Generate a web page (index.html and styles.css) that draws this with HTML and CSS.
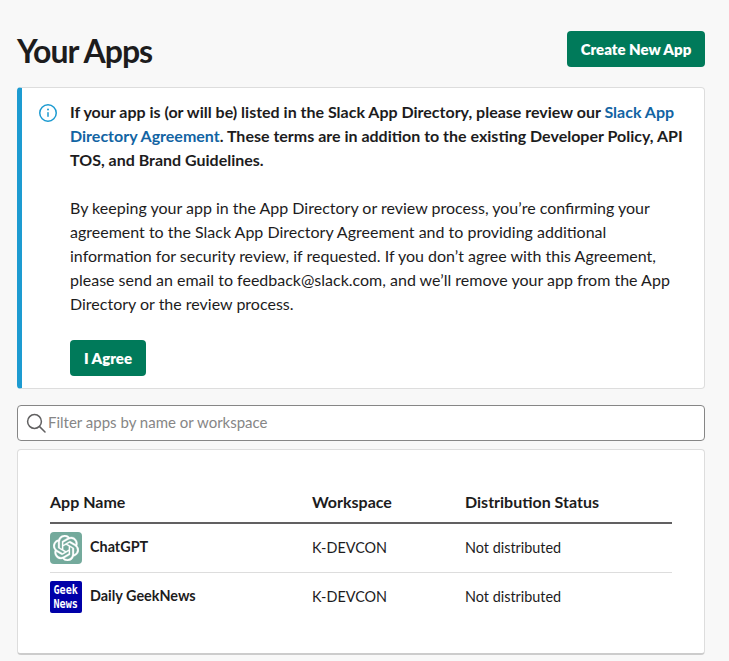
FILE: index.html
```html
<!DOCTYPE html>
<html lang="en">
<head>
<meta charset="utf-8">
<title>Your Apps</title>
<link rel="stylesheet" href="styles.css">
</head>
<body>
<main class="page">
  <header class="head">
    <h1 class="title">Your Apps</h1>
    <button class="btn btn-create">Create New App</button>
  </header>
  <section class="alert">
    <svg class="alert-icon" width="20" height="20" viewBox="0 0 20 20" fill="none"><circle cx="10" cy="10" r="8.25" stroke="#1d9bd1" stroke-width="1.5"/><rect x="9.25" y="9" width="1.5" height="5" rx=".7" fill="#1d9bd1"/><circle cx="10" cy="6.6" r="1" fill="#1d9bd1"/></svg>
    <div class="alert-body">
      <p class="alert-strong">If your app is (or will be) listed in the Slack App Directory, please review our <a class="link" href="#">Slack App Directory Agreement</a>. These terms are in addition to the existing Developer Policy, API TOS, and Brand Guidelines.</p>
      <p class="alert-text">By keeping your app in the App Directory or review process, you’re confirming your agreement to the Slack App Directory Agreement and to providing additional information for security review, if requested. If you don’t agree with this Agreement, please send an email to feedback@slack.com, and we’ll remove your app from the App Directory or the review process.</p>
      <button class="btn btn-agree">I Agree</button>
    </div>
  </section>
  <label class="search">
    <svg class="search-icon" width="20" height="20" viewBox="0 0 20 20" fill="none" stroke="#616061" stroke-width="1.5"><circle cx="8.5" cy="8.5" r="6.9"/><path d="M13.6 13.6 19 19" stroke-linecap="round"/></svg>
    <input class="search-input" type="text" placeholder="Filter apps by name or workspace">
  </label>
  <section class="card">
    <table class="apps">
      <thead>
        <tr><th class="col-name">App Name</th><th class="col-work">Workspace</th><th>Distribution Status</th></tr>
      </thead>
      <tbody>
        <tr>
          <td><div class="app"><span class="app-icon icon-gpt"><svg width="26" height="26" viewBox="0 0 24 24" fill="#fff" stroke="#fff" stroke-width=".3"><path d="M22.2819 9.8211a5.9847 5.9847 0 0 0-.5157-4.9108 6.0462 6.0462 0 0 0-6.5098-2.9A6.0651 6.0651 0 0 0 4.9807 4.1818a5.9847 5.9847 0 0 0-3.9977 2.9 6.0462 6.0462 0 0 0 .7427 7.0966 5.98 5.98 0 0 0 .511 4.9107 6.051 6.051 0 0 0 6.5146 2.9001A5.9847 5.9847 0 0 0 13.2599 24a6.0557 6.0557 0 0 0 5.7718-4.2058 5.9894 5.9894 0 0 0 3.9977-2.9001 6.0557 6.0557 0 0 0-.7475-7.0729zm-9.022 12.6081a4.4755 4.4755 0 0 1-2.8764-1.0408l.1419-.0804 4.7783-2.7582a.7948.7948 0 0 0 .3927-.6813v-6.7369l2.02 1.1686a.071.071 0 0 1 .038.052v5.5826a4.504 4.504 0 0 1-4.4945 4.4944zm-9.6607-4.1254a4.4708 4.4708 0 0 1-.5346-3.0137l.142.0852 4.783 2.7582a.7712.7712 0 0 0 .7806 0l5.8428-3.3685v2.3324a.0804.0804 0 0 1-.0332.0615L9.74 19.9502a4.4992 4.4992 0 0 1-6.1408-1.6464zM2.3408 7.8956a4.485 4.485 0 0 1 2.3655-1.9728V11.6a.7664.7664 0 0 0 .3879.6765l5.8144 3.3543-2.0201 1.1685a.0757.0757 0 0 1-.071 0l-4.8303-2.7865A4.504 4.504 0 0 1 2.3408 7.872zm16.5963 3.8558L13.1038 8.364 15.1192 7.2a.0757.0757 0 0 1 .071 0l4.8303 2.7913a4.4944 4.4944 0 0 1-.6765 8.1042v-5.6772a.79.79 0 0 0-.407-.667zm2.0107-3.0231l-.142-.0852-4.7735-2.7818a.7759.7759 0 0 0-.7854 0L9.409 9.2297V6.8974a.0662.0662 0 0 1 .0284-.0615l4.8303-2.7866a4.4992 4.4992 0 0 1 6.6802 4.66zM8.3065 12.863l-2.02-1.1638a.0804.0804 0 0 1-.038-.0567V6.0742a4.4992 4.4992 0 0 1 7.3757-3.4537l-.142.0805L8.704 5.459a.7948.7948 0 0 0-.3927.6813zm1.0976-2.3654l2.602-1.4998 2.6069 1.4998v2.9994l-2.5974 1.4997-2.6067-1.4997Z"/></svg></span><a class="app-name" href="#">ChatGPT</a></div></td>
          <td>K-DEVCON</td>
          <td>Not distributed</td>
        </tr>
        <tr>
          <td><div class="app"><span class="app-icon icon-geek"><span class="geek-line">Geek</span><span class="geek-line">News</span></span><a class="app-name" href="#">Daily GeekNews</a></div></td>
          <td>K-DEVCON</td>
          <td>Not distributed</td>
        </tr>
      </tbody>
    </table>
  </section>
</main>
</body>
</html>
```
FILE: styles.css
```css
* { box-sizing: border-box; }
html, body { margin: 0; height: 661px; overflow: hidden; }
body {
  background: #f8f8f8;
  color: #1d1c1d;
  font-family: Lato, "Liberation Sans", sans-serif;
  font-size: 16px;
  line-height: 24px;
}
.page { padding: 31px 24px 0 17px; }
.head { display: flex; justify-content: space-between; align-items: center; height: 36px; margin-bottom: 20px; }
.title { margin: 4px 0 0; font-size: 32px; font-weight: 700; line-height: 40px; letter-spacing: -1px; }
.btn {
  border: 0;
  border-radius: 4px;
  background: #007a5a;
  color: #fff;
  font: 800 15px/20px Lato, "Liberation Sans", sans-serif;
  height: 36px;
  padding: 0;
  white-space: nowrap;
}
.btn-create { width: 138px; }
.btn-agree { width: 76px; display: block; }
.alert {
  display: flex;
  height: 302px;
  background: #fff;
  border: 1px solid #ddd;
  border-left: 5px solid #1d9bd1;
  border-radius: 4px;
  padding: 12px 16px 0 16px;
  margin-bottom: 16px;
}
.alert-icon { flex: none; margin: 3px 12px 0 0; }
.alert-body { flex: 1; min-width: 0; }
.alert-strong { margin: 0 0 24px; font-weight: 700; }
.alert-text { margin: 0 0 24px; }
.link { color: #1264a3; text-decoration: none; }
.search {
  display: flex;
  align-items: center;
  height: 36px;
  background: #fff;
  border: 1px solid #868686;
  border-radius: 4px;
  padding: 0 8px;
  margin-bottom: 8px;
}
.search-icon { flex: none; margin-right: 2px; }
.search-input {
  flex: 1;
  border: 0;
  outline: 0;
  padding: 0 0 2px;
  background: transparent;
  font: 15px/20px Lato, "Liberation Sans", sans-serif;
  color: #1d1c1d;
}
.search-input::placeholder { color: #868686; opacity: 1; }
.card {
  height: 206px;
  background: #fff;
  border: 1px solid #ddd;
  border-bottom: 2px solid #ccc;
  border-radius: 4px;
  padding: 32px 32px 0;
}
.apps { width: 100%; border-collapse: collapse; table-layout: fixed; }
.apps th { text-align: left; font-weight: 700; height: 41px; padding: 0; border-bottom: 2px solid #616061; }
.col-name { width: 262px; }
.col-work { width: 153px; }
.apps td { padding: 0; height: 49px; border-bottom: 1px solid #ddd; vertical-align: middle; font-size: 14.4px; }
.apps tr:last-child td { border-bottom: 0; }
.app { display: flex; align-items: center; }
.app-icon { flex: none; width: 32px; height: 32px; border-radius: 4px; margin-right: 8px; display: flex; align-items: center; justify-content: center; }
.icon-gpt { background: #74aa9c; }
.icon-geek { background: #0000a8; flex-direction: column; border-radius: 2px; }
.geek-line { color: #fff; font: 700 13px/14px "DejaVu Sans Mono", monospace; transform: scaleX(.78); }
.app-name { color: #1d1c1d; font-weight: 700; text-decoration: none; font-size: 14.4px; margin-top: -2px; }
```
